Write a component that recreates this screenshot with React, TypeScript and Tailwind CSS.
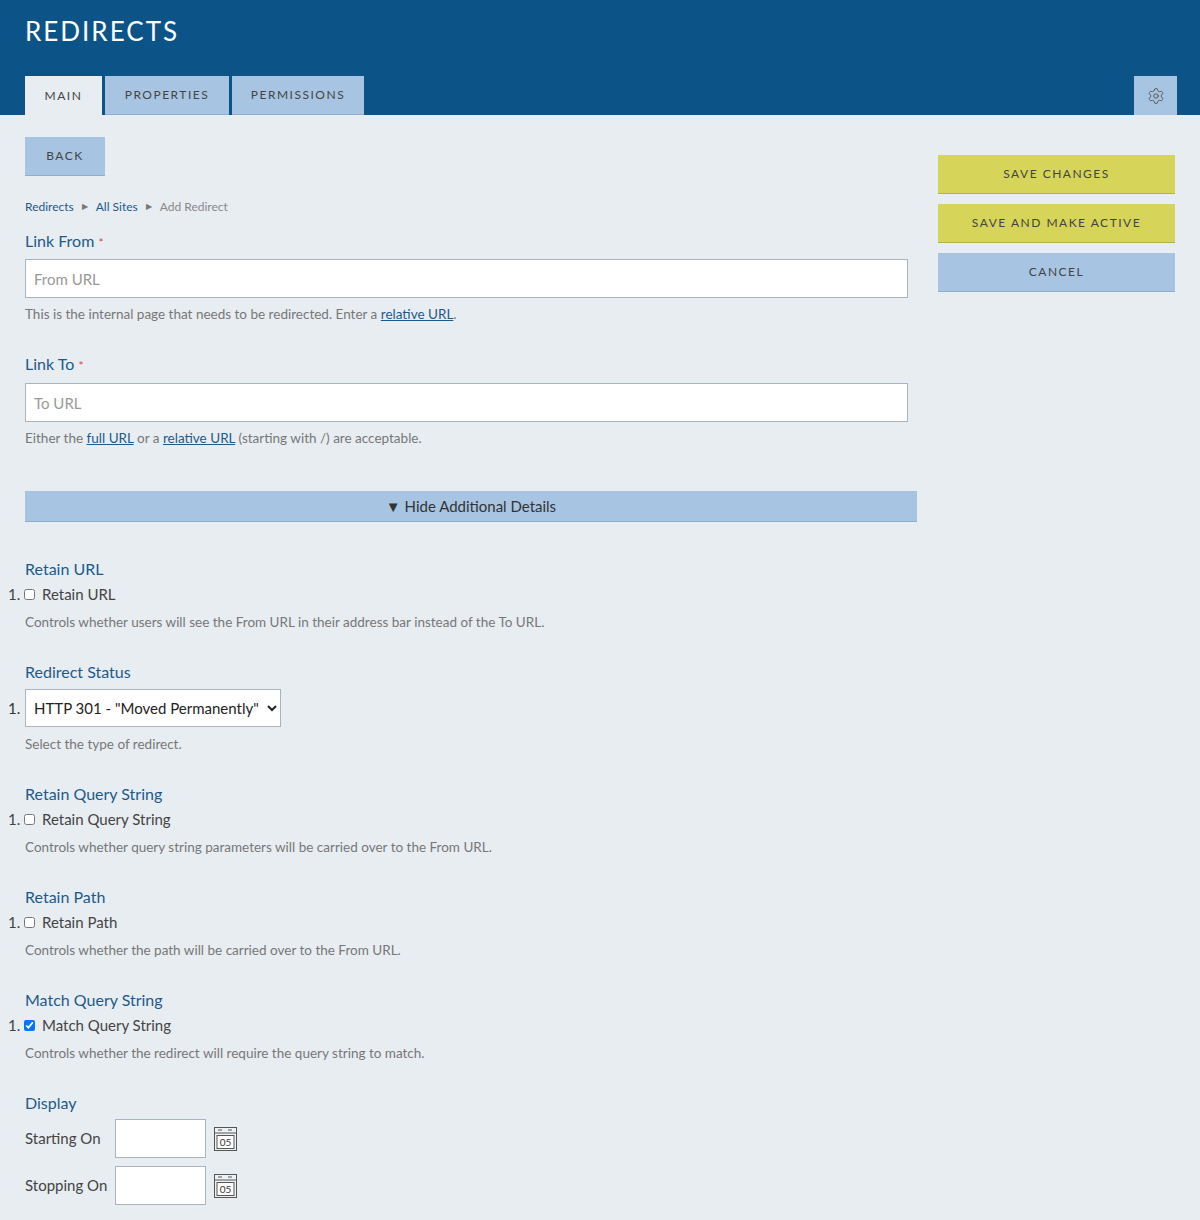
import { Settings } from "lucide-react";

const font = { fontFamily: "Lato, 'Open Sans', sans-serif" };

function Cal() {
  return (
    <svg width="23" height="24" viewBox="0 0 23 24" className="ml-2">
      <rect x="0.5" y="0.5" width="22" height="23" fill="#eef1f4" stroke="#555" />
      <line x1="0.5" y1="6" x2="22.5" y2="6" stroke="#555" />
      <line x1="4" y1="3" x2="8" y2="3" stroke="#555" />
      <line x1="14" y1="3" x2="18" y2="3" stroke="#555" />
      <rect x="3" y="8.5" width="17" height="13" fill="#fff" stroke="#555" />
      <text x="11.5" y="19" textAnchor="middle" fontSize="10" fill="#333" fontFamily="Lato, sans-serif">05</text>
    </svg>
  );
}

function Section({ title, children }: { title: string; children: React.ReactNode }) {
  return (
    <div className="mb-[31px]">
      <div className="text-[16px] leading-[20px] text-[#1d5a8c]">{title}</div>
      {children}
    </div>
  );
}

function Check({ label, checked }: { label: string; checked?: boolean }) {
  return (
    <div className="mt-[5px] flex items-center -ml-[17px] text-[15px] leading-[20px] text-[#444]">
      <span className="w-[15px]">1.</span>
      <input type="checkbox" defaultChecked={checked} className="w-[11px] h-[11px] mr-[7px] ml-[1px]" />
      {label}
    </div>
  );
}

function Help({ children, mt = "mt-[9px]" }: { children: React.ReactNode; mt?: string }) {
  return <p className={`text-[13.5px] leading-[18px] text-[#777] ${mt}`}>{children}</p>;
}

export default function App() {
  return (
    <div className="min-h-[1220px] bg-[#e8edf2]" style={font}>
      <div className="bg-[#0c5487] h-[115px] px-[25px] flex flex-col justify-between">
        <h1 className="text-white text-[26px] leading-[30px] tracking-[2px] pt-[16px]">REDIRECTS</h1>
        <div className="flex items-end">
          {["MAIN", "PROPERTIES", "PERMISSIONS"].map((t, i) => (
            <div
              key={t}
              className={`h-[39px] flex items-center justify-center text-[12px] tracking-[1.5px] text-[#444] mr-[3px] ${
                i === 0 ? "bg-[#e8edf2] w-[77px]" : "bg-[#a7c5e2] border-b border-[#8eaecb] " + (i === 1 ? "w-[124px]" : "w-[132px]")
              }`}
            >
              {t}
            </div>
          ))}
          <div className="ml-auto w-[43px] h-[39px] bg-[#a7c5e2] flex items-center justify-center -mr-[2px]">
            <Settings size={18} strokeWidth={1.3} className="text-[#555]" />
          </div>
        </div>
      </div>
      <div className="flex px-[25px]">
        <div className="w-[892px]">
          <button className="mt-[22px] w-[80px] h-[39px] bg-[#a7c5e2] border-b border-[#8eaecb] text-[12px] tracking-[1.5px] text-[#444]">BACK</button>
          <div className="mt-[24px] text-[12px] leading-[13px] flex items-center gap-[8px]">
            <span className="text-[#1d5a8c]">Redirects</span>
            <span className="text-[#777] text-[8px]">▶</span>
            <span className="text-[#1d5a8c]">All Sites</span>
            <span className="text-[#777] text-[8px]">▶</span>
            <span className="text-[#888]">Add Redirect</span>
          </div>
          <div className="mt-[18px] text-[16px] leading-[20px] text-[#1d5a8c]">Link From <span className="text-[#d44] text-[12px]">*</span></div>
          <input placeholder="From URL" className="block mt-[6px] w-[883px] h-[39px] bg-white border border-[#aab4bf] px-[8px] text-[15px] placeholder-[#999]" />
          <Help mt="mt-[7px]">This is the internal page that needs to be redirected. Enter a <a className="text-[#1d5a8c] underline">relative URL</a>.</Help>
          <div className="mt-[31px] text-[16px] leading-[20px] text-[#1d5a8c]">Link To <span className="text-[#d44] text-[12px]">*</span></div>
          <input placeholder="To URL" className="block mt-[7px] w-[883px] h-[39px] bg-white border border-[#aab4bf] px-[8px] text-[15px] placeholder-[#999]" />
          <Help mt="mt-[7px]">Either the <a className="text-[#1d5a8c] underline">full URL</a> or a <a className="text-[#1d5a8c] underline">relative URL</a> (starting with /) are acceptable.</Help>
          <div className="mt-[44px] h-[31px] bg-[#a7c5e2] border-b border-[#8eaecb] flex items-center justify-center text-[15px] text-[#333]">▼ Hide Additional Details</div>
          <div className="mt-[37px]">
            <Section title="Retain URL">
              <Check label="Retain URL" />
              <Help>Controls whether users will see the From URL in their address bar instead of the To URL.</Help>
            </Section>
            <Section title="Redirect Status">
              <div className="mt-[7px] flex items-center -ml-[17px] text-[15px] text-[#333]">
                <span className="w-[17px]">1.</span>
                <select className="h-[38px] bg-white border border-[#aab4bf] px-[4px] text-[15px] text-[#222]">
                  <option>HTTP 301 - "Moved Permanently"</option>
                </select>
              </div>
              <Help mt="mt-[8px]">Select the type of redirect.</Help>
            </Section>
            <Section title="Retain Query String">
              <Check label="Retain Query String" />
              <Help>Controls whether query string parameters will be carried over to the From URL.</Help>
            </Section>
            <Section title="Retain Path">
              <Check label="Retain Path" />
              <Help>Controls whether the path will be carried over to the From URL.</Help>
            </Section>
            <Section title="Match Query String">
              <Check label="Match Query String" checked />
              <Help>Controls whether the redirect will require the query string to match.</Help>
            </Section>
            <div className="text-[16px] leading-[20px] text-[#1d5a8c]">Display</div>
            {["Starting On", "Stopping On"].map((l, i) => (
              <div key={l} className={`flex items-center ${i ? "mt-[8px]" : "mt-[6px]"}`}>
                <span className="w-[90px] text-[15px] text-[#444]">{l}</span>
                <input className="w-[91px] h-[39px] bg-white border border-[#aab4bf]" />
                <Cal />
              </div>
            ))}
          </div>
        </div>
        <div className="ml-auto w-[237px] mt-[40px] flex flex-col gap-[10px]">
          <button className="h-[39px] bg-[#d6d55a] border-b border-[#b3b24a] text-[12px] tracking-[1.5px] text-[#444]">SAVE CHANGES</button>
          <button className="h-[39px] bg-[#d6d55a] border-b border-[#b3b24a] text-[12px] tracking-[1.5px] text-[#444]">SAVE AND MAKE ACTIVE</button>
          <button className="h-[39px] bg-[#a7c5e2] border-b border-[#8eaecb] text-[12px] tracking-[1.5px] text-[#444]">CANCEL</button>
        </div>
      </div>
    </div>
  );
}
